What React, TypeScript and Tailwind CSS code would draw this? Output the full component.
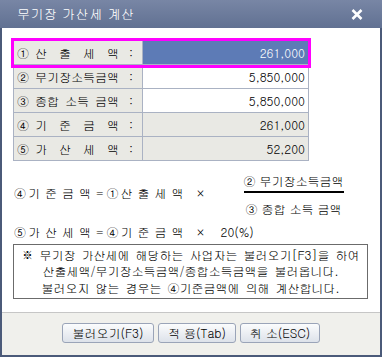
import React from 'react';

const FONT = "font-['Gulim','Noto_Sans_CJK_KR',sans-serif]";

type Row = {
  num: string;
  parts: string[];
  value: string;
  tone: 'sel' | 'white' | 'gray';
};

const rows: Row[] = [
  { num: '①', parts: ['산', '출', '세', '액'], value: '261,000', tone: 'sel' },
  { num: '②', parts: ['무기장소득금액'], value: '5,850,000', tone: 'white' },
  { num: '③', parts: ['종합', '소득', '금액'], value: '5,850,000', tone: 'white' },
  { num: '④', parts: ['기', '준', '금', '액'], value: '261,000', tone: 'gray' },
  { num: '⑤', parts: ['가', '산', '세', '액'], value: '52,200', tone: 'gray' },
];

// spaced-out word like "기 준 금 액"
const Spaced = ({ chars }: { chars: string[] }) => (
  <span className="flex gap-[5px]">
    {chars.map((c, i) => (
      <span key={i}>{c}</span>
    ))}
  </span>
);

const Btn = ({ label, w }: { label: string; w: string }) => (
  <button
    className={`${w} h-[20px] rounded-[3px] border border-[#9aa4b8] bg-gradient-to-b from-[#fbfcfd] to-[#dde2ea] text-[12px] leading-none text-black`}
  >
    {label}
  </button>
);

export default function App() {
  return (
    <div className={`w-[382px] h-[357px] flex flex-col bg-[#4b5a79] ${FONT} text-[12px] text-black`}>
      {/* title bar */}
      <div className="h-[28px] flex items-center justify-between pl-[17px] pr-[19px] bg-gradient-to-b from-[#7886a5] to-[#617192]">
        <span className="text-[13px] text-white tracking-[0.5px]">무기장 가산세 계산</span>
        <svg width="12" height="11" viewBox="0 0 12 11">
          <path d="M1.5 1 L10.5 10 M10.5 1 L1.5 10" stroke="white" strokeWidth="2.6" />
        </svg>
      </div>

      {/* body */}
      <div className="flex-1 mx-[2px] flex flex-col bg-white">
        <div className="pt-[12px] pl-[11px]">
          <div className="w-[296px] border-t border-x border-[#aab2c3]">
            {rows.map((r, i) => (
              <div
                key={i}
                className={`relative flex h-[24px] border-b border-[#aab2c3] ${
                  r.tone === 'sel' ? 'z-10 outline-[3px] outline-solid outline-[#ff00ff]' : ''
                }`}
              >
                <div className="w-[129px] flex items-center pl-[3px] bg-[#e9e9e4] border-r border-[#aab2c3]">
                  <span className="w-[14px]">{r.num}</span>
                  <span className="ml-[4px] w-[84px] flex justify-between">
                    {r.parts.map((p, j) => (
                      <span key={j}>{p}</span>
                    ))}
                  </span>
                  <span className="ml-[10px]">:</span>
                </div>
                <div
                  className={`flex-1 flex items-center justify-end pr-[3px] ${
                    r.tone === 'sel'
                      ? 'bg-[#5d7bb6] text-white'
                      : r.tone === 'gray'
                      ? 'bg-[#e9e9e4]'
                      : 'bg-white'
                  }`}
                >
                  {r.value}
                </div>
              </div>
            ))}
          </div>
        </div>

        {/* formula 1 */}
        <div className="mt-[12px] flex items-start pl-[12px]">
          <div className="mt-[12px] flex items-center leading-[15px]">
            <span>④</span>
            <span className="ml-[2px]"><Spaced chars={['기', '준', '금', '액']} /></span>
            <span className="ml-[5px]">=</span>
            <span className="ml-[3px]">①</span>
            <span className="ml-[2px]"><Spaced chars={['산', '출', '세', '액']} /></span>
            <span className="ml-[12px]">×</span>
          </div>
          <div className="ml-[38px] w-[100px] flex flex-col items-center">
            <span className="leading-[15px]">② 무기장소득금액</span>
            <div className="mt-[3px] w-full h-[2px] bg-black" />
            <span className="mt-[8px] leading-[15px]">③ 종합 소득 금액</span>
          </div>
        </div>

        {/* formula 2 */}
        <div className="mt-[8px] flex items-center pl-[12px] leading-[15px]">
          <span>⑤</span>
          <span className="ml-[2px]"><Spaced chars={['가', '산', '세', '액']} /></span>
          <span className="ml-[5px]">=</span>
          <span className="ml-[3px]">④</span>
          <span className="ml-[2px]"><Spaced chars={['기', '준', '금', '액']} /></span>
          <span className="ml-[12px]">×</span>
          <span className="ml-[15px]">20(%)</span>
        </div>

        {/* note */}
        <div className="mt-[5px] ml-[11px] w-[355px] h-[55px] border border-[#6b6b6b] flex flex-col items-center justify-center text-[12px] leading-[16.5px] [word-spacing:2px]">
          <span>※ 무기장 가산세에 해당하는 사업자는 불러오기[F3]을 하여</span>
          <span>산출세액/무기장소득금액/종합소득금액을 불러옵니다.</span>
          <span>불러오지 않는 경우는 ④기준금액에 의해 계산합니다.</span>
        </div>

        {/* footer */}
        <div className="mt-auto h-[43px] border-t border-[#c6c6c6] bg-[#f0f0ec] flex justify-center gap-[4px] pt-[10px]">
          <Btn label="불러오기(F3)" w="w-[92px]" />
          <Btn label="적 용(Tab)" w="w-[78px]" />
          <Btn label="취 소(ESC)" w="w-[80px]" />
        </div>
      </div>
      <div className="h-[2px]" />
    </div>
  );
}
